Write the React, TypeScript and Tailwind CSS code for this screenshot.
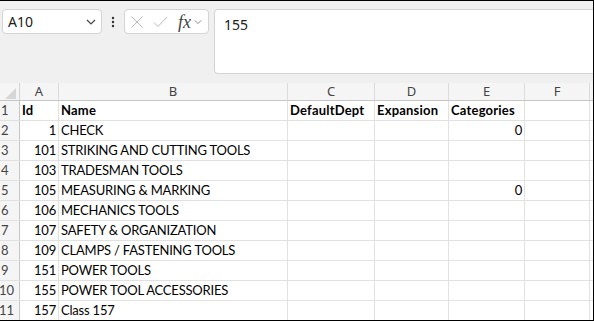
import React from "react";

const cols = [
  { w: "w-[39px]", align: "right" },
  { w: "w-[229px]", align: "left" },
  { w: "w-[87px]", align: "left" },
  { w: "w-[74px]", align: "left" },
  { w: "w-[76px]", align: "left" },
  { w: "w-[65px]", align: "left" },
];

const letters = ["A", "B", "C", "D", "E", "F"];

const data: string[][] = [
  ["Id", "Name", "DefaultDept", "Expansion", "Categories", ""],
  ["1", "CHECK", "", "", "0", ""],
  ["101", "STRIKING AND CUTTING TOOLS", "", "", "", ""],
  ["103", "TRADESMAN TOOLS", "", "", "", ""],
  ["105", "MEASURING & MARKING", "", "", "0", ""],
  ["106", "MECHANICS TOOLS", "", "", "", ""],
  ["107", "SAFETY & ORGANIZATION", "", "", "", ""],
  ["109", "CLAMPS / FASTENING TOOLS", "", "", "", ""],
  ["151", "POWER TOOLS", "", "", "", ""],
  ["155", "POWER TOOL ACCESSORIES", "", "", "", ""],
  ["157", "Class 157", "", "", "", ""],
];

const cellFont = { fontFamily: "Lato, 'Liberation Sans', sans-serif" };
const uiFont = { fontFamily: "'Noto Sans', 'Liberation Sans', sans-serif" };

function Chevron({ className }: { className?: string }) {
  return (
    <svg className={className} width="10" height="6" viewBox="0 0 10 6" fill="none">
      <path d="M1 1 L5 5 L9 1" stroke="currentColor" strokeWidth="1.2" />
    </svg>
  );
}

export default function App() {
  return (
    <div className="w-[594px] h-[321px] overflow-hidden bg-white border-t border-r border-b border-black box-border flex flex-col">
      {/* top bar */}
      <div className="h-[82px] shrink-0 bg-[#f0f0f0] flex items-start pt-[8px]" style={uiFont}>
        <div className="ml-[2px] w-[100px] h-[25px] bg-white border border-[#d4d4d4] rounded-[4px] flex items-center pl-[5px] pr-[5px]">
          <span className="text-[14px] text-[#202020] flex-1">A10</span>
          <Chevron className="text-[#444]" />
        </div>
        <div className="w-[22px] h-[25px] flex items-center justify-center">
          <svg width="4" height="12" viewBox="0 0 4 12">
            <circle cx="2" cy="2" r="1.2" fill="#333" />
            <circle cx="2" cy="6" r="1.2" fill="#333" />
            <circle cx="2" cy="10" r="1.2" fill="#333" />
          </svg>
        </div>
        <div className="w-[85px] h-[25px] bg-white border border-[#d4d4d4] rounded-[4px] flex items-center pl-[5px]">
          <svg width="14" height="14" viewBox="0 0 14 14" fill="none">
            <path d="M1.5 1.5 L12.5 12.5 M12.5 1.5 L1.5 12.5" stroke="#b8b8b8" strokeWidth="1" />
          </svg>
          <svg className="ml-[9px]" width="15" height="12" viewBox="0 0 15 12" fill="none">
            <path d="M1 6.5 L5 10.5 L14 1" stroke="#b8b8b8" strokeWidth="1" />
          </svg>
          <span
            className="ml-[10px] text-[18px] italic text-[#444] leading-none"
            style={{ fontFamily: "'Liberation Serif', serif" }}
          >
            fx
          </span>
          <Chevron className="ml-[3px] text-[#888] w-[8px]" />
        </div>
        <div className="ml-[5px] flex-1 h-[65px] bg-white border-l border-t border-b border-[#d4d4d4] rounded-l-[4px] pl-[9px] pt-[2px]">
          <span className="text-[14px] text-[#202020]">155</span>
        </div>
      </div>

      {/* column header */}
      <div className="h-[18px] shrink-0 flex bg-[#f5f5f5] border-b border-[#c6c6c6]" style={uiFont}>
        <div className="w-[20px] h-full border-r border-[#d4d4d4] relative">
          <svg className="absolute left-[5px] bottom-[1px]" width="11" height="11" viewBox="0 0 11 11">
            <path d="M11 0 L11 11 L0 11 Z" fill="#d6d6d6" />
          </svg>
        </div>
        {letters.map((l, i) => (
          <div
            key={l}
            className={`${cols[i].w} h-full border-r border-[#dcdcdc] flex items-center justify-center text-[13px] text-[#444]`}
          >
            {l}
          </div>
        ))}
      </div>

      {/* rows */}
      <div className="flex flex-col" style={cellFont}>
        {data.map((row, r) => (
          <div
            key={r}
            className={`flex shrink-0 ${r === data.length - 1 ? "h-[19px]" : "h-[20px] border-b border-[#e1e1e1]"}`}
          >
            <div
              className="w-[20px] h-full bg-[#f5f5f5] border-r border-[#c6c6c6] flex items-center text-[13px] text-[#444] pl-[1px] pt-[1px]"
              style={cellFont}
            >
              <span className={r + 1 >= 10 ? "-ml-[2px]" : ""}>{r + 1}</span>
            </div>
            {row.map((v, c) => {
              const isNum = /^\d+$/.test(v);
              return (
                <div
                  key={c}
                  className={`${cols[c].w} h-full border-r border-[#e1e1e1] flex items-center px-[2px] pt-[1px] text-[13px] text-black whitespace-nowrap overflow-visible ${
                    isNum ? "justify-end" : "justify-start"
                  } ${r === 0 ? "font-bold tracking-[0.2px]" : "tracking-[-0.2px]"}`}
                >
                  {v}
                </div>
              );
            })}
          </div>
        ))}
      </div>
    </div>
  );
}
